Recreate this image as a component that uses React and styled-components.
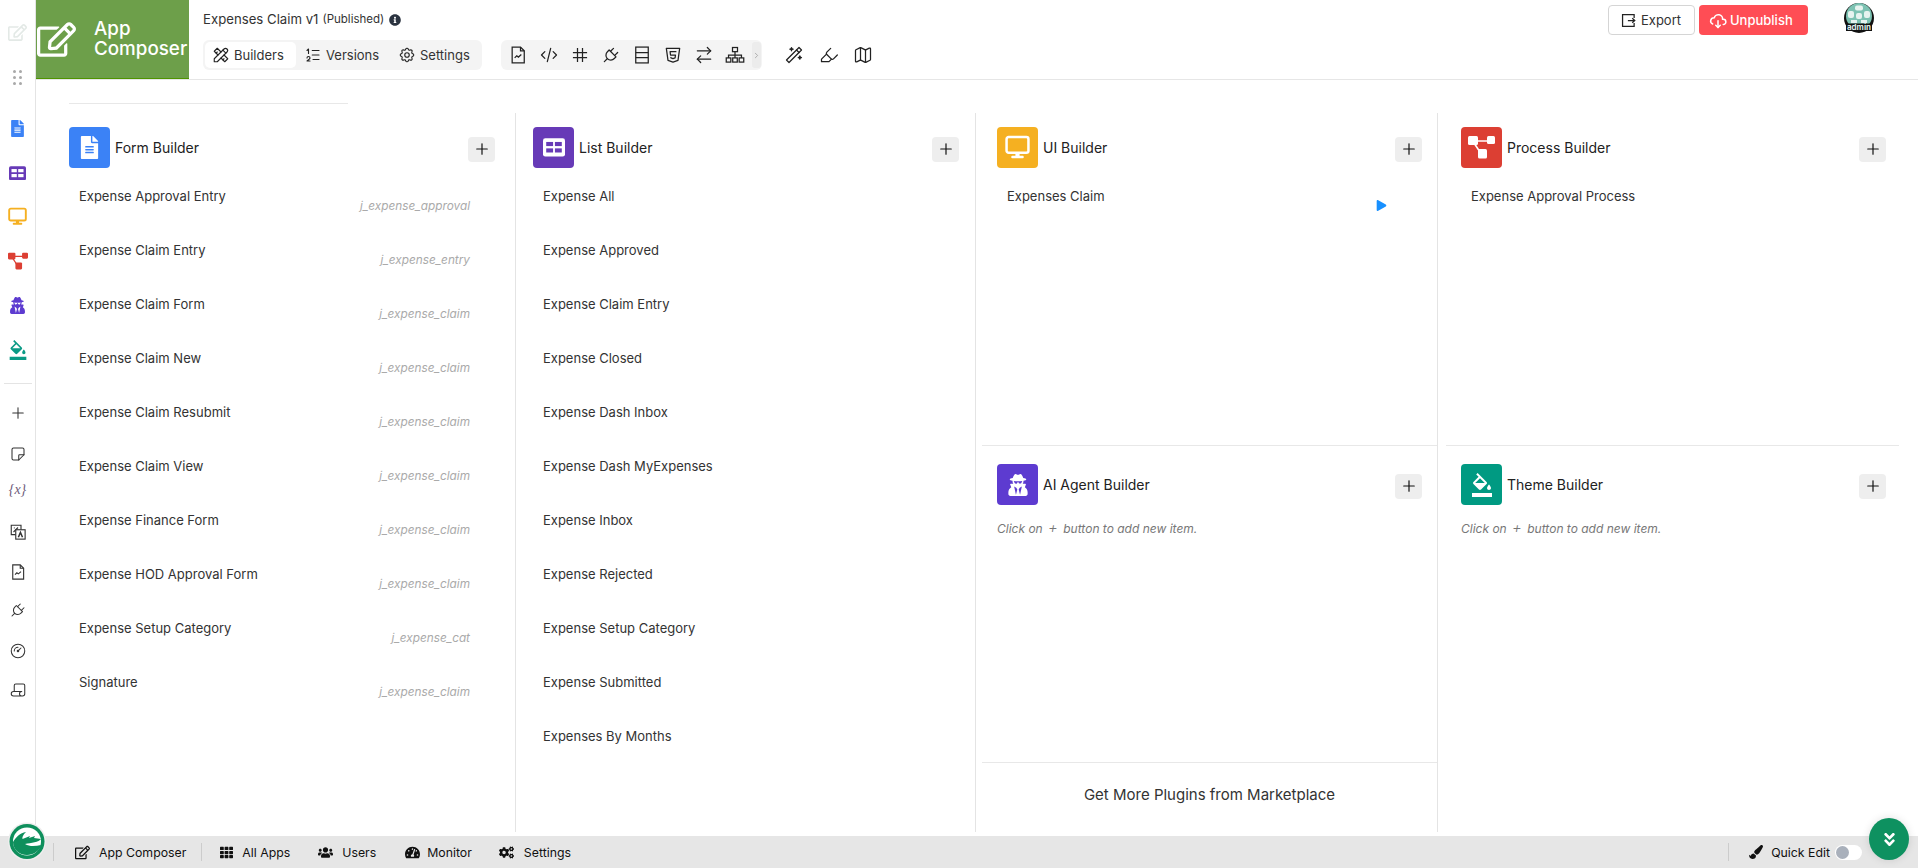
import React from 'react'
import styled, { createGlobalStyle } from 'styled-components'
import {
  FaRegEdit, FaFileAlt, FaUserSecret, FaTh, FaUsers,
  FaTachometerAlt, FaCogs, FaPaintBrush, FaInfoCircle, FaPlay,
  FaAngleDoubleDown,
} from 'react-icons/fa'
import { MdFormatColorFill } from 'react-icons/md'
import { LuHighlighter, LuMap, LuArrowRightLeft } from 'react-icons/lu'
import {
  TbTools, TbListNumbers, TbSettings, TbCode, TbPlug,
  TbBrandHtml5, TbChevronRight, TbWand, TbCloudDownload, TbPlus, TbNote,
  TbGauge, TbScript,
} from 'react-icons/tb'

const GlobalStyle = createGlobalStyle`
  html, body { margin: 0; padding: 0; height: 100%; background: #fff; overflow: hidden; }
  body { font-family: Inter, "Liberation Sans", sans-serif; color: #333; }
  * { box-sizing: border-box; }
`

const Page = styled.div`
  position: relative;
  display: flex;
  flex-direction: column;
  height: 868px;
`
const Main = styled.div`
  display: flex;
  flex: 1;
  min-height: 0;
`

/* left rail */
const Rail = styled.aside`
  width: 36px;
  flex: none;
  border-right: 1px solid #e4e4e4;
  padding-top: 20px;
  display: flex;
  flex-direction: column;
  align-items: center;
`
const RailSlot = styled.div`
  height: 24px;
  flex: none;
  margin-top: ${p => p.$top || 0}px;
  display: flex;
  justify-content: center;
  align-items: center;
  width: 100%;
  font-size: ${p => p.$size || 18}px;
  color: ${p => p.$color || '#333'};
  svg { stroke-width: ${p => (p.$thin ? 1.4 : '')}; }
`
const RailLine = styled.hr`
  width: 28px;
  flex: none;
  border: 0;
  border-top: 1px solid #e4e4e4;
  margin: 21px 0 0;
`
const GripDots = styled.div`
  display: grid;
  grid-template-columns: 3px 3px;
  gap: 3px;
  span { width: 3px; height: 3px; border-radius: 50%; background: #a9a9a9; }
`
const VarMark = styled.span`
  font-family: "Liberation Serif", serif;
  font-style: italic;
  font-size: 14px;
  color: #6d5a7a;
`

/* header */
const Content = styled.div`
  flex: 1;
  min-width: 0;
  display: flex;
  flex-direction: column;
`
const Header = styled.header`
  height: 80px;
  flex: none;
  display: flex;
  border-bottom: 1px solid #e6e6e6;
`
const Brand = styled.div`
  width: 153px;
  height: 79px;
  flex: none;
  background: #6d9f4a;
  border-bottom: 1px solid #4f9400;
  color: #fff;
  display: flex;
  align-items: center;
  font-size: 18.8px;
  font-weight: 500;
  line-height: 20px;
  padding-left: 1px;
  svg { font-size: 39px; margin-right: 18px; flex: none; }
`
const HeaderMain = styled.div`
  padding: 12px 0 0 14px;
  width: 700px;
`
const AppName = styled.div`
  font-size: 13.2px;
  line-height: 15px;
  color: #333;
  display: flex;
  align-items: center;
  small { font-size: 11.5px; margin-left: 4px; color: #333; }
  svg { font-size: 12px; margin-left: 5px; color: #2b3340; }
`
const Toolbars = styled.div`
  display: flex;
  align-items: center;
  margin-top: 13px;
`
const Tabs = styled.div`
  width: 279px;
  height: 30px;
  display: flex;
  align-items: center;
  padding: 2px;
  border-radius: 6px;
  background: #f4f4f4;
`
const Tab = styled.div`
  width: ${p => p.$w}px;
  height: 26px;
  padding-left: ${p => p.$pad}px;
  display: flex;
  align-items: center;
  gap: 4px;
  font-size: 13px;
  color: #333;
  border-radius: 5px;
  background: ${p => (p.$active ? '#fff' : 'transparent')};
  svg { font-size: 18px; color: #222; stroke-width: 1.5; }
`
const ToolGroup = styled.div`
  width: 261px;
  height: 30px;
  margin-left: 19px;
  padding-left: 1px;
  display: flex;
  align-items: center;
  border-radius: 6px;
  background: #f4f4f4;
`
const ToolIcon = styled.div`
  width: 31px;
  display: flex;
  justify-content: center;
  font-size: 20px;
  color: #222;
  svg { stroke-width: 1.5; }
`
const ToolMore = styled.div`
  width: 9px;
  height: 26px;
  margin-left: 2px;
  border-radius: 3px;
  background: #ececec;
  color: #999;
  font-size: 11px;
  display: flex;
  align-items: center;
  justify-content: center;
`
const ExtraTools = styled.div`
  display: flex;
  margin-left: 15px;
`
const ExtraIcon = styled(ToolIcon)`
  width: 34.5px;
`
const HeaderRight = styled.div`
  margin-left: auto;
  padding: 5px 44px 0 0;
  display: flex;
  align-items: flex-start;
`
const ExportButton = styled.div`
  width: 87px;
  height: 30px;
  padding-left: 12px;
  border: 1px solid #d5d5d5;
  border-radius: 4px;
  display: flex;
  align-items: center;
  gap: 5px;
  font-size: 13px;
  color: #333;
`
const UnpublishButton = styled.div`
  width: 109px;
  height: 30px;
  margin-left: 4px;
  padding-left: 10px;
  border-radius: 4px;
  background: #ff4d55;
  color: #fff;
  display: flex;
  align-items: center;
  gap: 3px;
  font-size: 13px;
  font-weight: 500;
  svg { font-size: 18px; }
`
const AvatarWrap = styled.div`
  width: 30px;
  height: 30px;
  margin: -2px 0 0 36px;
`

/* builders */
const Board = styled.div`
  flex: 1;
  min-height: 0;
  display: grid;
  grid-template-columns: 480px 460px 462px 1fr;
  padding-top: 24px;
  position: relative;
`
const TopRule = styled.hr`
  position: absolute;
  left: 33px;
  top: 23px;
  width: 279px;
  margin: 0;
  border: 0;
  border-top: 1px solid #e8e8e8;
`
const Column = styled.section`
  border-right: ${p => (p.$last ? '0' : '1px solid #e4e4e4')};
  padding-top: 14px;
  margin-top: 9px;
  display: flex;
  flex-direction: column;
  height: 719px;
`
const Panel = styled.div`
  flex: ${p => (p.$fixed ? 'none' : 1)};
  height: ${p => (p.$h ? `${p.$h}px` : 'auto')};
  padding: 0 ${p => p.$right}px 0 ${p => p.$left}px;
`
const PanelHead = styled.div`
  display: flex;
  align-items: center;
  height: 41px;
`
const BuilderIcon = styled.div`
  width: 41px;
  height: 41px;
  flex: none;
  border-radius: 4px;
  background: ${p => p.$bg};
  color: #fff;
  font-size: ${p => p.$size || 23}px;
  display: flex;
  align-items: center;
  justify-content: center;
`
const PanelTitle = styled.div`
  margin-left: 5px;
  font-size: 14px;
  color: #222;
`
const AddButton = styled.div`
  margin-left: auto;
  margin-top: 3px;
  width: 27px;
  height: 25px;
  border-radius: 4px;
  background: #eeeeee;
  color: #111;
  font-size: 18px;
  display: flex;
  align-items: center;
  justify-content: center;
  svg { stroke-width: 1.6; }
`
const Item = styled.div`
  position: relative;
  height: 54px;
  padding: 20px 0 0 10px;
  font-size: 13px;
  line-height: 16px;
  color: #333;
`
const ItemCode = styled.span`
  position: absolute;
  right: 25px;
  top: 30px;
  font-size: 11.8px;
  font-style: italic;
  color: #aaa;
`
const PlayMark = styled.span`
  position: absolute;
  right: 35px;
  top: 32px;
  color: #1890ff;
  font-size: 11px;
  line-height: 14px;
`
const Hint = styled.div`
  margin-top: 16px;
  font-size: 12px;
  font-style: italic;
  color: #777;
  span { font-size: 15px; font-weight: 300; line-height: 12px; margin: 0 2px; }
`
const RowRule = styled.hr`
  flex: none;
  width: ${p => p.$w}px;
  margin: 0 0 18px ${p => p.$left}px;
  border: 0;
  border-top: 1px solid #e8e8e8;
`
const Marketplace = styled.div`
  flex: none;
  margin-left: 6px;
  height: 70px;
  padding-bottom: 6px;
  border-top: 1px solid #e8e8e8;
  display: flex;
  align-items: center;
  justify-content: center;
  font-size: 15px;
  color: #333;
`

/* bottom bar */
const BottomBar = styled.footer`
  height: 32px;
  flex: none;
  background: #e6e6e6;
  display: flex;
  align-items: center;
  padding-left: 53px;
  font-size: 12.3px;
  color: #111;
`
const BarSep = styled.span`
  width: 1px;
  height: 18px;
  background: #ccc;
  margin-left: ${p => p.$left || 0}px;
`
const BarLink = styled.div`
  display: flex;
  align-items: center;
  margin-left: ${p => p.$left}px;
  svg { font-size: ${p => p.$size || 15}px; margin-right: ${p => p.$gap}px; flex: none; }
`
const QuickEdit = styled.div`
  margin-left: auto;
  margin-right: 56px;
  display: flex;
  align-items: center;
  svg { font-size: 14px; margin: 0 8px 0 20px; }
`
const Toggle = styled.div`
  width: 27px;
  height: 15px;
  margin-left: 5px;
  border-radius: 8px;
  background: #fff;
  span { display: block; width: 13px; height: 13px; margin: 1px; border-radius: 50%; background: #a9b0bb; }
`
const BarLogo = styled.div`
  position: absolute;
  left: 8px;
  top: 822px;
  width: 38px;
  height: 39px;
`
const Fab = styled.div`
  position: absolute;
  left: 1869px;
  top: 818px;
  width: 40px;
  height: 42px;
  border-radius: 50%;
  background: #0e9160;
  color: #fff;
  font-size: 17px;
  display: flex;
  align-items: center;
  justify-content: center;
  box-shadow: 0 0 8px rgba(0, 0, 0, 0.12);
`

const ListGlyph = ({ size, bg, fg }) => (
  <svg width={size} height={size * 0.86} viewBox="0 0 24 20">
    <rect x="0" y="0" width="24" height="20" rx="2.5" fill={bg} />
    <rect x="3.5" y="4" width="7.5" height="4.5" fill={fg} />
    <rect x="13" y="4" width="7.5" height="4.5" fill={fg} />
    <rect x="3.5" y="11" width="7.5" height="4.5" fill={fg} />
    <rect x="13" y="11" width="7.5" height="4.5" fill={fg} />
  </svg>
)

const MonitorGlyph = ({ size, color, fill }) => (
  <svg width={size} height={size} viewBox="0 0 24 24">
    <rect x="1.5" y="2" width="21" height="15" rx="2" fill={fill} stroke={color} strokeWidth="2.4" />
    <rect x="10" y="17" width="4" height="3.5" fill={color} />
    <rect x="6" y="20" width="12" height="2.4" rx="1" fill={color} />
  </svg>
)

const ProcessGlyph = ({ width, color }) => (
  <svg width={width} height={width * 0.89} viewBox="0 0 27 24">
    <path d="M8 6h13M6 8l6 9" stroke={color} strokeWidth="1.6" fill="none" />
    <rect x="0" y="1" width="10" height="9" rx="1.5" fill={color} />
    <rect x="19" y="1" width="8" height="8" rx="1.5" fill={color} />
    <rect x="10" y="14" width="9" height="9.5" rx="1.5" fill={color} />
  </svg>
)

const FileChart = ({ size }) => (
  <svg width={size} height={size} viewBox="0 0 24 24" fill="none" stroke="currentColor" strokeWidth="1.5">
    <path d="M5 2.5h10l4.5 4.5v14.500H5z" />
    <path d="M15 2.500V7h4.500" />
    <path d="M8 15.500l2.500-2.500 2 1.500 3.500-3" />
  </svg>
)

const HashGlyph = () => (
  <svg width="20" height="20" viewBox="0 0 24 24" fill="none" stroke="currentColor" strokeWidth="1.5">
    <path d="M3.500 9h17M3.500 15h17M9 3.500v17M15 3.500v17" />
  </svg>
)

const RowsGlyph = () => (
  <svg width="20" height="20" viewBox="0 0 24 24" fill="none" stroke="currentColor" strokeWidth="1.5">
    <rect x="4.5" y="2.5" width="15" height="19" />
    <path d="M4.500 9h15M4.500 15h15" />
  </svg>
)

const SitemapGlyph = () => (
  <svg width="20" height="20" viewBox="0 0 24 24" fill="none" stroke="currentColor" strokeWidth="1.3">
    <rect x="9" y="3" width="6" height="5" />
    <rect x="1.5" y="15.5" width="5.5" height="5" />
    <rect x="9.25" y="15.5" width="5.5" height="5" />
    <rect x="17" y="15.5" width="5.5" height="5" />
    <path d="M12 8v7.500M4.250 15.500V12h15.500v3.500" />
  </svg>
)

const ExportGlyph = () => (
  <svg width="15" height="15" viewBox="0 0 24 24" fill="none" stroke="#222" strokeWidth="2">
    <path d="M21 8V2.500H2.500v19H21V16" />
    <path d="M11 12h11M18 8.500l4 3.500-4 3.500" />
  </svg>
)

const LangGlyph = () => (
  <svg width="18" height="18" viewBox="0 0 24 24" fill="none" stroke="currentColor" strokeWidth="1.5">
    <path d="M9 15.500H3V3h13v6" />
    <path d="M6 12l6-6M6.500 6.500h1M11 11h1" />
    <rect x="9" y="9" width="12.5" height="12.5" fill="#fff" />
    <path d="M12.500 19l2.750-6.500L18 19" strokeWidth="2" />
  </svg>
)

const Avatar = () => (
  <svg width="30" height="30" viewBox="0 0 30 30">
    <circle cx="15" cy="15" r="15" fill="#111" />
    <circle cx="15" cy="13" r="13" fill="#7cc2b2" />
    <g fill="#e6f3ef">
      <rect x="11" y="2.5" width="8" height="5" rx="2" />
      <rect x="4" y="8" width="6" height="7" rx="2" />
      <rect x="20" y="8" width="6" height="7" rx="2" />
      <rect x="12" y="10" width="6" height="6" rx="2" />
      <rect x="7" y="17" width="6" height="3" />
      <rect x="17" y="17" width="6" height="3" />
    </g>
    <rect x="2" y="20.5" width="26" height="7.5" fill="#111" />
    <text x="15" y="27" fontSize="8" fontWeight="700" textAnchor="middle" fill="#dfeee9" fontFamily="Inter, sans-serif">admin</text>
  </svg>
)

const LeafLogo = () => (
  <svg width="38" height="39" viewBox="0 0 38 39">
    <circle cx="19" cy="19.5" r="19" fill="#eeeeee" />
    <circle cx="19" cy="19.5" r="17.5" fill="#0e8f5c" />
    <circle cx="19" cy="19.5" r="14" fill="#fff" />
    <path d="M5 20C8 15 12 11 18 10C15 13 14 15 14.500 17L22 14L21 16L27 14L26 16L33 17C31 20 23 21 17 22C22 25 28 24 33 23C32 29 25 33 19 33C11 33 5 27 5 20Z" fill="#0e8f5c" />
  </svg>
)

const formItems = [
  ['Expense Approval Entry', 'j_expense_approval'],
  ['Expense Claim Entry', 'j_expense_entry'],
  ['Expense Claim Form', 'j_expense_claim'],
  ['Expense Claim New', 'j_expense_claim'],
  ['Expense Claim Resubmit', 'j_expense_claim'],
  ['Expense Claim View', 'j_expense_claim'],
  ['Expense Finance Form', 'j_expense_claim'],
  ['Expense HOD Approval Form', 'j_expense_claim'],
  ['Expense Setup Category', 'j_expense_cat'],
  ['Signature', 'j_expense_claim'],
]

const listItems = [
  'Expense All', 'Expense Approved', 'Expense Claim Entry', 'Expense Closed',
  'Expense Dash Inbox', 'Expense Dash MyExpenses', 'Expense Inbox',
  'Expense Rejected', 'Expense Setup Category', 'Expense Submitted',
  'Expenses By Months',
]

const Head = ({ icon, bg, size, title }) => (
  <PanelHead>
    <BuilderIcon $bg={bg} $size={size}>{icon}</BuilderIcon>
    <PanelTitle>{title}</PanelTitle>
    <AddButton><TbPlus /></AddButton>
  </PanelHead>
)

const AddHint = () => <Hint>Click on <span>+</span> button to add new item.</Hint>

export default function App() {
  return (
    <Page>
      <GlobalStyle />
      <Main>
        <Rail>
          <RailSlot $size={19} $color="#e3e9e6"><FaRegEdit /></RailSlot>
          <RailSlot $top={21}><GripDots>{[0, 1, 2, 3, 4, 5].map(i => <span key={i} />)}</GripDots></RailSlot>
          <RailSlot $top={27} $size={17} $color="#3b82f6"><FaFileAlt /></RailSlot>
          <RailSlot $top={21}><ListGlyph size={17} bg="#673ab7" fg="#fff" /></RailSlot>
          <RailSlot $top={19}><MonitorGlyph size={19} color="#f5b021" fill="#fff" /></RailSlot>
          <RailSlot $top={21}><ProcessGlyph width={20} color="#dc3f33" /></RailSlot>
          <RailSlot $top={20} $size={17} $color="#5d3bd0"><FaUserSecret /></RailSlot>
          <RailSlot $top={21} $size={20} $color="#0a9a85"><MdFormatColorFill /></RailSlot>
          <RailLine />
          <RailSlot $top={17} $thin><TbPlus /></RailSlot>
          <RailSlot $top={17} $thin><TbNote /></RailSlot>
          <RailSlot $top={12}><VarMark>{'{x}'}</VarMark></RailSlot>
          <RailSlot $top={18}><LangGlyph /></RailSlot>
          <RailSlot $top={16}><FileChart size={18} /></RailSlot>
          <RailSlot $top={14} $thin><TbPlug /></RailSlot>
          <RailSlot $top={17} $thin><TbGauge /></RailSlot>
          <RailSlot $top={15} $thin><TbScript /></RailSlot>
        </Rail>
        <Content>
          <Header>
            <Brand><FaRegEdit /><span>App<br />Composer</span></Brand>
            <HeaderMain>
              <AppName>Expenses Claim v1<small>(Published)</small><FaInfoCircle /></AppName>
              <Toolbars>
                <Tabs>
                  <Tab $w={91} $pad={7} $active><TbTools />Builders</Tab>
                  <Tab $w={92} $pad={8}><TbListNumbers />Versions</Tab>
                  <Tab $w={92} $pad={10}><TbSettings />Settings</Tab>
                </Tabs>
                <ToolGroup>
                  <ToolIcon><FileChart size={20} /></ToolIcon>
                  <ToolIcon><TbCode /></ToolIcon>
                  <ToolIcon><HashGlyph /></ToolIcon>
                  <ToolIcon><TbPlug /></ToolIcon>
                  <ToolIcon><RowsGlyph /></ToolIcon>
                  <ToolIcon><TbBrandHtml5 /></ToolIcon>
                  <ToolIcon><LuArrowRightLeft /></ToolIcon>
                  <ToolIcon><SitemapGlyph /></ToolIcon>
                  <ToolMore><TbChevronRight /></ToolMore>
                </ToolGroup>
                <ExtraTools>
                  <ExtraIcon><TbWand /></ExtraIcon>
                  <ExtraIcon><LuHighlighter /></ExtraIcon>
                  <ExtraIcon><LuMap /></ExtraIcon>
                </ExtraTools>
              </Toolbars>
            </HeaderMain>
            <HeaderRight>
              <ExportButton><ExportGlyph />Export</ExportButton>
              <UnpublishButton><TbCloudDownload />Unpublish</UnpublishButton>
              <AvatarWrap><Avatar /></AvatarWrap>
            </HeaderRight>
          </Header>
          <Board>
            <TopRule />
            <Column>
              <Panel $left={33} $right={20}>
                <Head icon={<FaFileAlt />} bg="#3b82f6" title="Form Builder" />
                {formItems.map(([name, code]) => (
                  <Item key={name}>{name}<ItemCode>{code}</ItemCode></Item>
                ))}
              </Panel>
            </Column>
            <Column>
              <Panel $left={17} $right={16}>
                <Head icon={<ListGlyph size={22} bg="#fff" fg="#673ab7" />} bg="#673ab7" title="List Builder" />
                {listItems.map(name => <Item key={name}>{name}</Item>)}
              </Panel>
            </Column>
            <Column>
              <Panel $left={21} $right={15} $fixed $h={318}>
                <Head icon={<MonitorGlyph size={25} color="#fff" fill="#f5b021" />} bg="#f5b021" title="UI Builder" />
                <Item>Expenses Claim<PlayMark><FaPlay /></PlayMark></Item>
              </Panel>
              <RowRule $left={6} $w={455} />
              <Panel $left={21} $right={15}>
                <Head icon={<FaUserSecret />} bg="#5d3bd0" size={22} title="AI Agent Builder" />
                <AddHint />
              </Panel>
              <Marketplace>Get More Plugins from Marketplace</Marketplace>
            </Column>
            <Column $last>
              <Panel $left={23} $right={32} $fixed $h={318}>
                <Head icon={<ProcessGlyph width={27} color="#fff" />} bg="#dc3f33" title="Process Builder" />
                <Item>Expense Approval Process</Item>
              </Panel>
              <RowRule $left={8} $w={453} />
              <Panel $left={23} $right={32}>
                <Head icon={<MdFormatColorFill />} bg="#009a82" size={24} title="Theme Builder" />
                <AddHint />
              </Panel>
            </Column>
          </Board>
        </Content>
      </Main>
      <BottomBar>
        <BarSep />
        <BarLink $left={21} $gap={9}><FaRegEdit />App Composer</BarLink>
        <BarSep $left={15} />
        <BarLink $left={18} $gap={9} $size={13}><FaTh />All Apps</BarLink>
        <BarLink $left={28} $gap={9}><FaUsers />Users</BarLink>
        <BarLink $left={29} $gap={7}><FaTachometerAlt />Monitor</BarLink>
        <BarLink $left={27} $gap={10}><FaCogs />Settings</BarLink>
        <QuickEdit>
          <BarSep />
          <FaPaintBrush />Quick Edit
          <Toggle><span /></Toggle>
        </QuickEdit>
      </BottomBar>
      <BarLogo><LeafLogo /></BarLogo>
      <Fab><FaAngleDoubleDown /></Fab>
    </Page>
  )
}
